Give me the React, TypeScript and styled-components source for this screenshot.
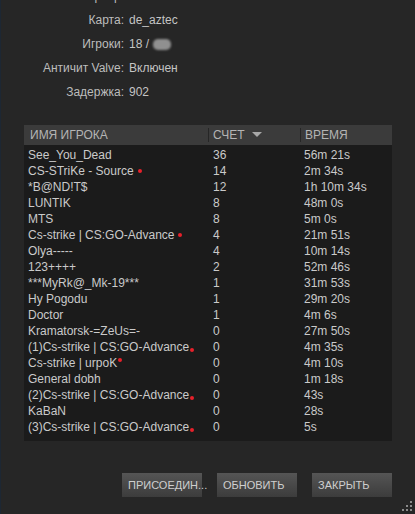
import React from "react";
import styled, {createGlobalStyle} from "styled-components";

type PlayerType = {
  name: string,
  score: number,
  time: string,
  mark?: 'mid' | 'low' | 'high',
}

const info = [
  {label: 'Сервер:', value: 'Counter-Strike: Source'},
  {label: 'Карта:', value: 'de_aztec'},
  {label: 'Игроки:', value: '18 /'},
  {label: 'Античит Valve:', value: 'Включен'},
  {label: 'Задержка:', value: '902'},
]

const players: PlayerType[] = [
  {name: 'See_You_Dead', score: 36, time: '56m 21s'},
  {name: 'CS-STriKe - Source', score: 14, time: '2m 34s', mark: 'mid'},
  {name: '*B@ND!T$', score: 12, time: '1h 10m 34s'},
  {name: 'LUNTIK', score: 8, time: '48m 0s'},
  {name: 'MTS', score: 8, time: '5m 0s'},
  {name: 'Cs-strike | CS:GO-Advance', score: 4, time: '21m 51s', mark: 'mid'},
  {name: 'Olya-----', score: 4, time: '10m 14s'},
  {name: '123++++', score: 2, time: '52m 46s'},
  {name: '***MyRk@_Mk-19***', score: 1, time: '31m 53s'},
  {name: 'Hy Pogodu', score: 1, time: '29m 20s'},
  {name: 'Doctor', score: 1, time: '4m 6s'},
  {name: 'Kramatorsk-=ZeUs=-', score: 0, time: '27m 50s'},
  {name: '(1)Cs-strike | CS:GO-Advance', score: 0, time: '4m 35s', mark: 'low'},
  {name: 'Cs-strike | urpoK', score: 0, time: '4m 10s', mark: 'high'},
  {name: 'General dobh', score: 0, time: '1m 18s'},
  {name: '(2)Cs-strike | CS:GO-Advance', score: 0, time: '43s', mark: 'low'},
  {name: 'KaBaN', score: 0, time: '28s'},
  {name: '(3)Cs-strike | CS:GO-Advance', score: 0, time: '5s', mark: 'low'},
]

const GlobalStyle = createGlobalStyle`
  body {
    margin: 0;
    background: #262626;
    font-family: "Liberation Sans", Arial, sans-serif;
  }
`

export default function App() {
  return (
    <Window>
      <GlobalStyle/>
      <Info>
        {info.map((row, i) => (
          <React.Fragment key={i}>
            <Label>{row.label}</Label>
            <Value>
              {row.value}
              {row.label === 'Игроки:' && <Blur/>}
            </Value>
          </React.Fragment>
        ))}
      </Info>

      <Table>
        <Head>
          <HeadCell>Имя игрока</HeadCell>
          <HeadCell $divider>
            Счет
            <SortArrow viewBox="0 0 10 6" width="10" height="6">
              <path d="M0 0 L10 0 L5 5 Z" fill="#a8a8a8"/>
            </SortArrow>
          </HeadCell>
          <HeadCell $divider>Время</HeadCell>
        </Head>
        <Body>
          {players.map((p, i) => (
            <Row key={i}>
              <Cell>
                {p.name}
                {p.mark && <Dot $mark={p.mark}/>}
              </Cell>
              <Cell $pad={5}>{p.score}</Cell>
              <Cell $pad={4}>{p.time}</Cell>
            </Row>
          ))}
        </Body>
      </Table>

      <Buttons>
        <Button>Присоедин...</Button>
        <Button>Обновить</Button>
        <Button>Закрыть</Button>
      </Buttons>

      <Grip viewBox="0 0 12 12" width="12" height="12">
        {[[9, 1], [9, 5], [5, 5], [9, 9], [5, 9], [1, 9]].map(([x, y], i) => (
          <rect key={i} x={x} y={y} width="2" height="2" fill="#8a8a8a"/>
        ))}
      </Grip>
    </Window>
  )
}

const Window = styled.div`
    position: relative;
    width: 415px;
    height: 514px;
    box-sizing: border-box;
    border-left: 1px solid #1d2733;
    background: #262626;
    overflow: hidden;
`

const Info = styled.div`
    display: grid;
    grid-template-columns: 123px 1fr;
    grid-auto-rows: 24px;
    column-gap: 5px;
    margin-top: -16px;
    font-size: 12px;
    color: #c4c4c4;
`

const Label = styled.div`
    display: flex;
    align-items: center;
    justify-content: flex-end;
    color: #bdbdbd;
`

const Value = styled.div`
    display: flex;
    align-items: center;
    gap: 4px;
`

const Blur = styled.span`
    display: inline-block;
    width: 18px;
    height: 11px;
    border-radius: 5px;
    background: #909090;
    filter: blur(1.2px);
`

const Table = styled.div`
    margin: 21px 23px 0 23px;
    background: #1b1b1b;
    padding-bottom: 6px;
`

const Head = styled.div`
    display: grid;
    grid-template-columns: 184px 92px 1fr;
    height: 20px;
    background: #3b3b3b;
`

const HeadCell = styled.div<{ $divider?: boolean }>`
    display: flex;
    align-items: center;
    gap: 7px;
    padding-left: ${props => props.$divider ? '4px' : '6px'};
    border-left: ${props => props.$divider ? '1px solid #262626' : 'none'};
    margin: 3px 0;
    text-transform: uppercase;
    font-size: 12px;
    color: #b4b4b4;
`

const SortArrow = styled.svg`
    display: block;
`

const Body = styled.div`
    padding-top: 2px;
`

const Row = styled.div`
    display: grid;
    grid-template-columns: 184px 92px 1fr;
    height: 16px;
    align-items: center;
`

const Cell = styled.div<{ $pad?: number }>`
    padding-left: ${props => props.$pad ?? 4}px;
    font-size: 12px;
    color: #cacaca;
    white-space: nowrap;
`

const Dot = styled.span<{ $mark: 'mid' | 'low' | 'high' }>`
    display: inline-block;
    width: 4px;
    height: 4px;
    border-radius: 50%;
    background: #e8202a;
    margin-left: ${props => props.$mark === 'mid' ? '4px' : '1px'};
    vertical-align: ${props => props.$mark === 'low' ? '-1px' : props.$mark === 'high' ? '5px' : '2px'};
`

const Buttons = styled.div`
    display: flex;
    justify-content: flex-end;
    gap: 15px;
    margin: 32px 23px 0 0;
`

const Button = styled.button`
    width: 80px;
    height: 24px;
    padding: 0 0 0 6px;
    border: none;
    text-align: left;
    text-transform: uppercase;
    font-family: "Liberation Sans", Arial, sans-serif;
    font-size: 11px;
    color: #cfcfcf;
    background: linear-gradient(to bottom, #555555, #3c3c3c);
    white-space: nowrap;
`

const Grip = styled.svg`
    position: absolute;
    right: 2px;
    bottom: 2px;
`
